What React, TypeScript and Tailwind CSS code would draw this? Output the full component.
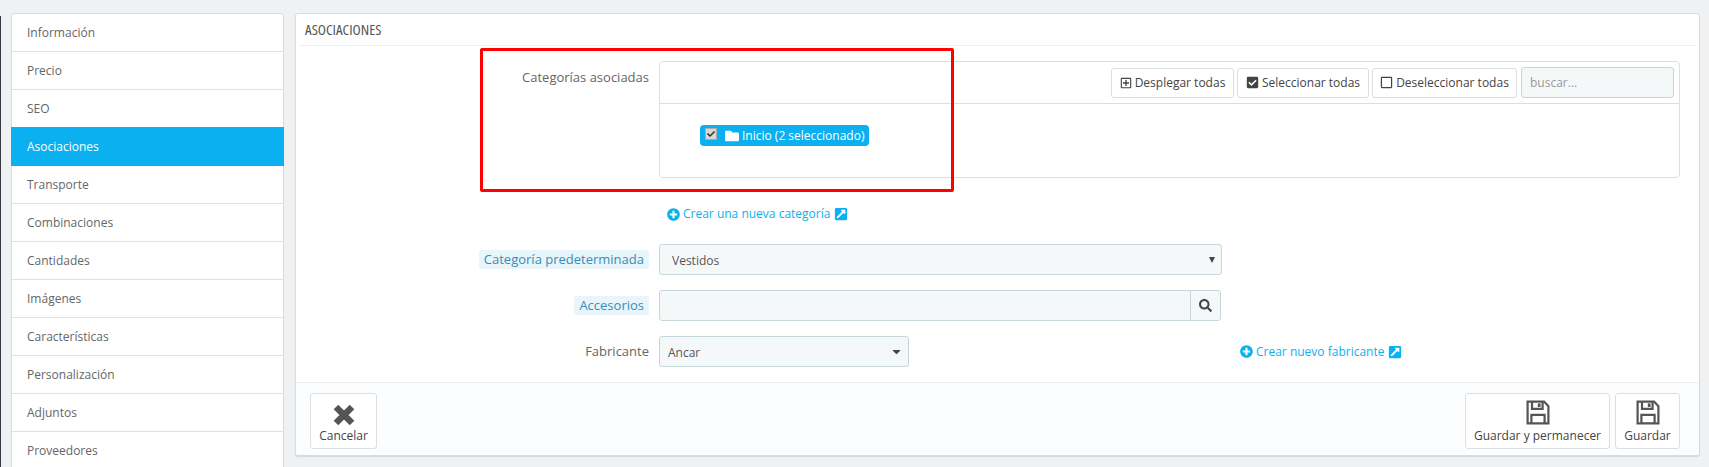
import type { ReactNode } from "react";
import {
  FaCaretDown,
  FaCheck,
  FaCheckSquare,
  FaExternalLinkSquareAlt,
  FaFolder,
  FaPlusCircle,
  FaRegPlusSquare,
  FaRegSquare,
  FaSearch,
} from "react-icons/fa";

const TABS = [
  "Información",
  "Precio",
  "SEO",
  "Asociaciones",
  "Transporte",
  "Combinaciones",
  "Cantidades",
  "Imágenes",
  "Características",
  "Personalización",
  "Adjuntos",
  "Proveedores",
];

function SaveIcon() {
  return (
    <svg width="24" height="25" viewBox="0 0 24 25" className="fill-none stroke-[#555] stroke-[2.2]">
      <path d="M1.6 1.6h16.5l4.3 4.6v17.2H1.6z" />
      <path d="M6 1.6v7.2h10.6V1.6" />
      <path d="M5.4 23.4v-8.6h13.2v8.6" />
      <path d="M13.2 3.4v3.6" strokeWidth="2.8" />
    </svg>
  );
}

function CloseIcon() {
  return (
    <svg width="22" height="22" viewBox="0 0 22 22" className="-mb-[1px] stroke-[#555] stroke-[6.5]">
      <path d="M3 3l16 16M19 3L3 19" />
    </svg>
  );
}

function Sidebar() {
  return (
    <nav className="mt-[13px] ml-[10px] w-[273px] shrink-0 self-start rounded-t-[3px] border border-[#d9dcde] bg-white">
      {TABS.map((tab) => (
        <div
          key={tab}
          className={
            tab === "Asociaciones"
              ? "-mx-px -mt-px flex h-[39px] items-center bg-[#0bb0f0] pl-[16px] text-white"
              : "flex h-[38px] items-center border-b border-[#dfe2e4] pl-[15px] text-[#666]"
          }
        >
          {tab}
        </div>
      ))}
    </nav>
  );
}

function ToolButton({ icon, label, width }: { icon: ReactNode; label: string; width: string }) {
  return (
    <div className={`flex h-[30px] items-center justify-center gap-[3px] rounded-[3px] border border-[#dcdfe1] bg-white text-[#444] ${width}`}>
      {icon}
      {label}
    </div>
  );
}

function FormRow({ label, hint, children }: { label: string; hint?: boolean; children: ReactNode }) {
  return (
    <div className="flex items-center gap-[10px]">
      <div className="flex w-[353px] justify-end text-[13px] leading-[19px]">
        {hint ? (
          <span className="rounded-[2px] bg-[#e8f5fb] px-[5px] text-[#3a8cb5]">{label}</span>
        ) : (
          <span className="text-[#666]">{label}</span>
        )}
      </div>
      {children}
    </div>
  );
}

function CreateLink({ label }: { label: string }) {
  return (
    <span className="flex items-center gap-[3px] text-[#0bb0f0]">
      <FaPlusCircle className="text-[13px]" />
      {label}
      <FaExternalLinkSquareAlt className="ml-[1px] text-[14px]" />
    </span>
  );
}

function FooterButton({ icon, label, width }: { icon: ReactNode; label: string; width: string }) {
  return (
    <div className={`flex h-[56px] flex-col items-center justify-end rounded-[3px] border border-[#dcdfe1] bg-white pb-[3px] text-[#444] ${width}`}>
      {icon}
      <span className="mt-[2px] leading-[18px]">{label}</span>
    </div>
  );
}

export default function App() {
  return (
    <div className="flex h-[467px] w-[1709px] overflow-hidden bg-[#eff1f2] font-['Open_Sans',sans-serif] text-[12px]">
      <div className="mt-[16px] w-px shrink-0 bg-[#363a41]" />
      <Sidebar />

      <main className="relative mt-[13px] ml-[11px] h-[443px] w-[1405px] rounded-[3px] border border-[#d9dcde] bg-white shadow-[0_1px_1px_#d5d8da]">
        <h2 className="mx-[3px] h-[32px] border-b border-[#eeeeee] pt-[7px] pl-[6px] text-[15px] leading-[16px] text-[#555] [font-stretch:75%]">
          ASOCIACIONES
        </h2>

        <div className="mt-[15px] flex gap-[10px]">
          <div className="w-[353px] pt-[7px] text-right text-[13px] leading-[19px] text-[#666]">Categorías asociadas</div>
          <div className="h-[117px] w-[1021px] rounded-[4px] border border-[#dcdfe1]">
            <div className="flex h-[42px] items-center justify-end gap-[3px] border-b border-[#dcdfe1] pr-[5px]">
              <ToolButton icon={<FaRegPlusSquare className="text-[12px]" />} label="Desplegar todas" width="w-[123px]" />
              <ToolButton icon={<FaCheckSquare className="text-[13px]" />} label="Seleccionar todas" width="w-[132px]" />
              <ToolButton icon={<FaRegSquare className="text-[13px]" />} label="Deseleccionar todas" width="w-[145px]" />
              <div className="ml-[1px] flex h-[31px] w-[153px] items-center rounded-[3px] border border-[#c7d6db] bg-[#f5f8f9] pl-[8px] text-[#999]">
                buscar...
              </div>
            </div>
            <div className="pt-[21px] pl-[40px]">
              <span className="flex h-[21px] w-[169px] items-center rounded-[4px] bg-[#0bb0f0] pl-[5px] text-white">
                <span className="mb-[3px] flex h-[12px] w-[12px] items-center justify-center border border-[#aaa] bg-[#d8d8d8] text-[8px] text-[#333]">
                  <FaCheck />
                </span>
                <FaFolder className="ml-[8px] text-[14px]" />
                <span className="ml-[3px]">Inicio (2 seleccionado)</span>
              </span>
            </div>
          </div>
        </div>

        <div className="mt-[27px] ml-[371px]">
          <CreateLink label="Crear una nueva categoría" />
        </div>

        <div className="mt-[21px] flex flex-col gap-[15px]">
          <FormRow label="Categoría predeterminada" hint>
            <div className="flex h-[31px] w-[563px] items-center justify-between rounded-[3px] border border-[#c7d6db] bg-[#f5f8f9] pr-[6px] pl-[12px] text-[#555]">
              <span className="mt-[2px]">Vestidos</span>
              <svg width="6" height="6" viewBox="0 0 6 6" className="fill-[#444]">
                <path d="M0 0h6L3 6z" />
              </svg>
            </div>
          </FormRow>
          <FormRow label="Accesorios" hint>
            <div className="flex h-[31px] w-[562px] rounded-[3px] border border-[#c7d6db] bg-[#f5f8f9]">
              <div className="flex-1" />
              <div className="flex w-[30px] items-center justify-center border-l border-[#c7d6db] text-[13px] text-[#444]">
                <FaSearch />
              </div>
            </div>
          </FormRow>
          <FormRow label="Fabricante">
            <div className="flex h-[31px] w-[250px] items-center justify-between rounded-[3px] border border-[#c7d6db] bg-[#f5f8f9] pr-[5px] pl-[8px] text-[#555]">
              <span className="mt-[2px]">Ancar</span>
              <FaCaretDown className="text-[13px] text-[#444]" />
            </div>
            <div className="ml-[321px]">
              <CreateLink label="Crear nuevo fabricante" />
            </div>
          </FormRow>
        </div>

        <footer className="absolute inset-x-0 bottom-0 flex h-[73px] items-start justify-between rounded-b-[3px] border-t border-[#eeeeee] bg-[#fcfdfe] pt-[10px] pr-[19px] pl-[14px]">
          <FooterButton icon={<CloseIcon />} label="Cancelar" width="w-[67px]" />
          <div className="flex gap-[5px]">
            <FooterButton icon={<SaveIcon />} label="Guardar y permanecer" width="w-[145px]" />
            <FooterButton icon={<SaveIcon />} label="Guardar" width="w-[65px]" />
          </div>
        </footer>

        {/* annotation drawn over the screenshot */}
        <div className="absolute top-[34px] left-[184px] h-[144px] w-[474px] rounded-[2px] border-[3px] border-[#ff0000]" />
      </main>
    </div>
  );
}
